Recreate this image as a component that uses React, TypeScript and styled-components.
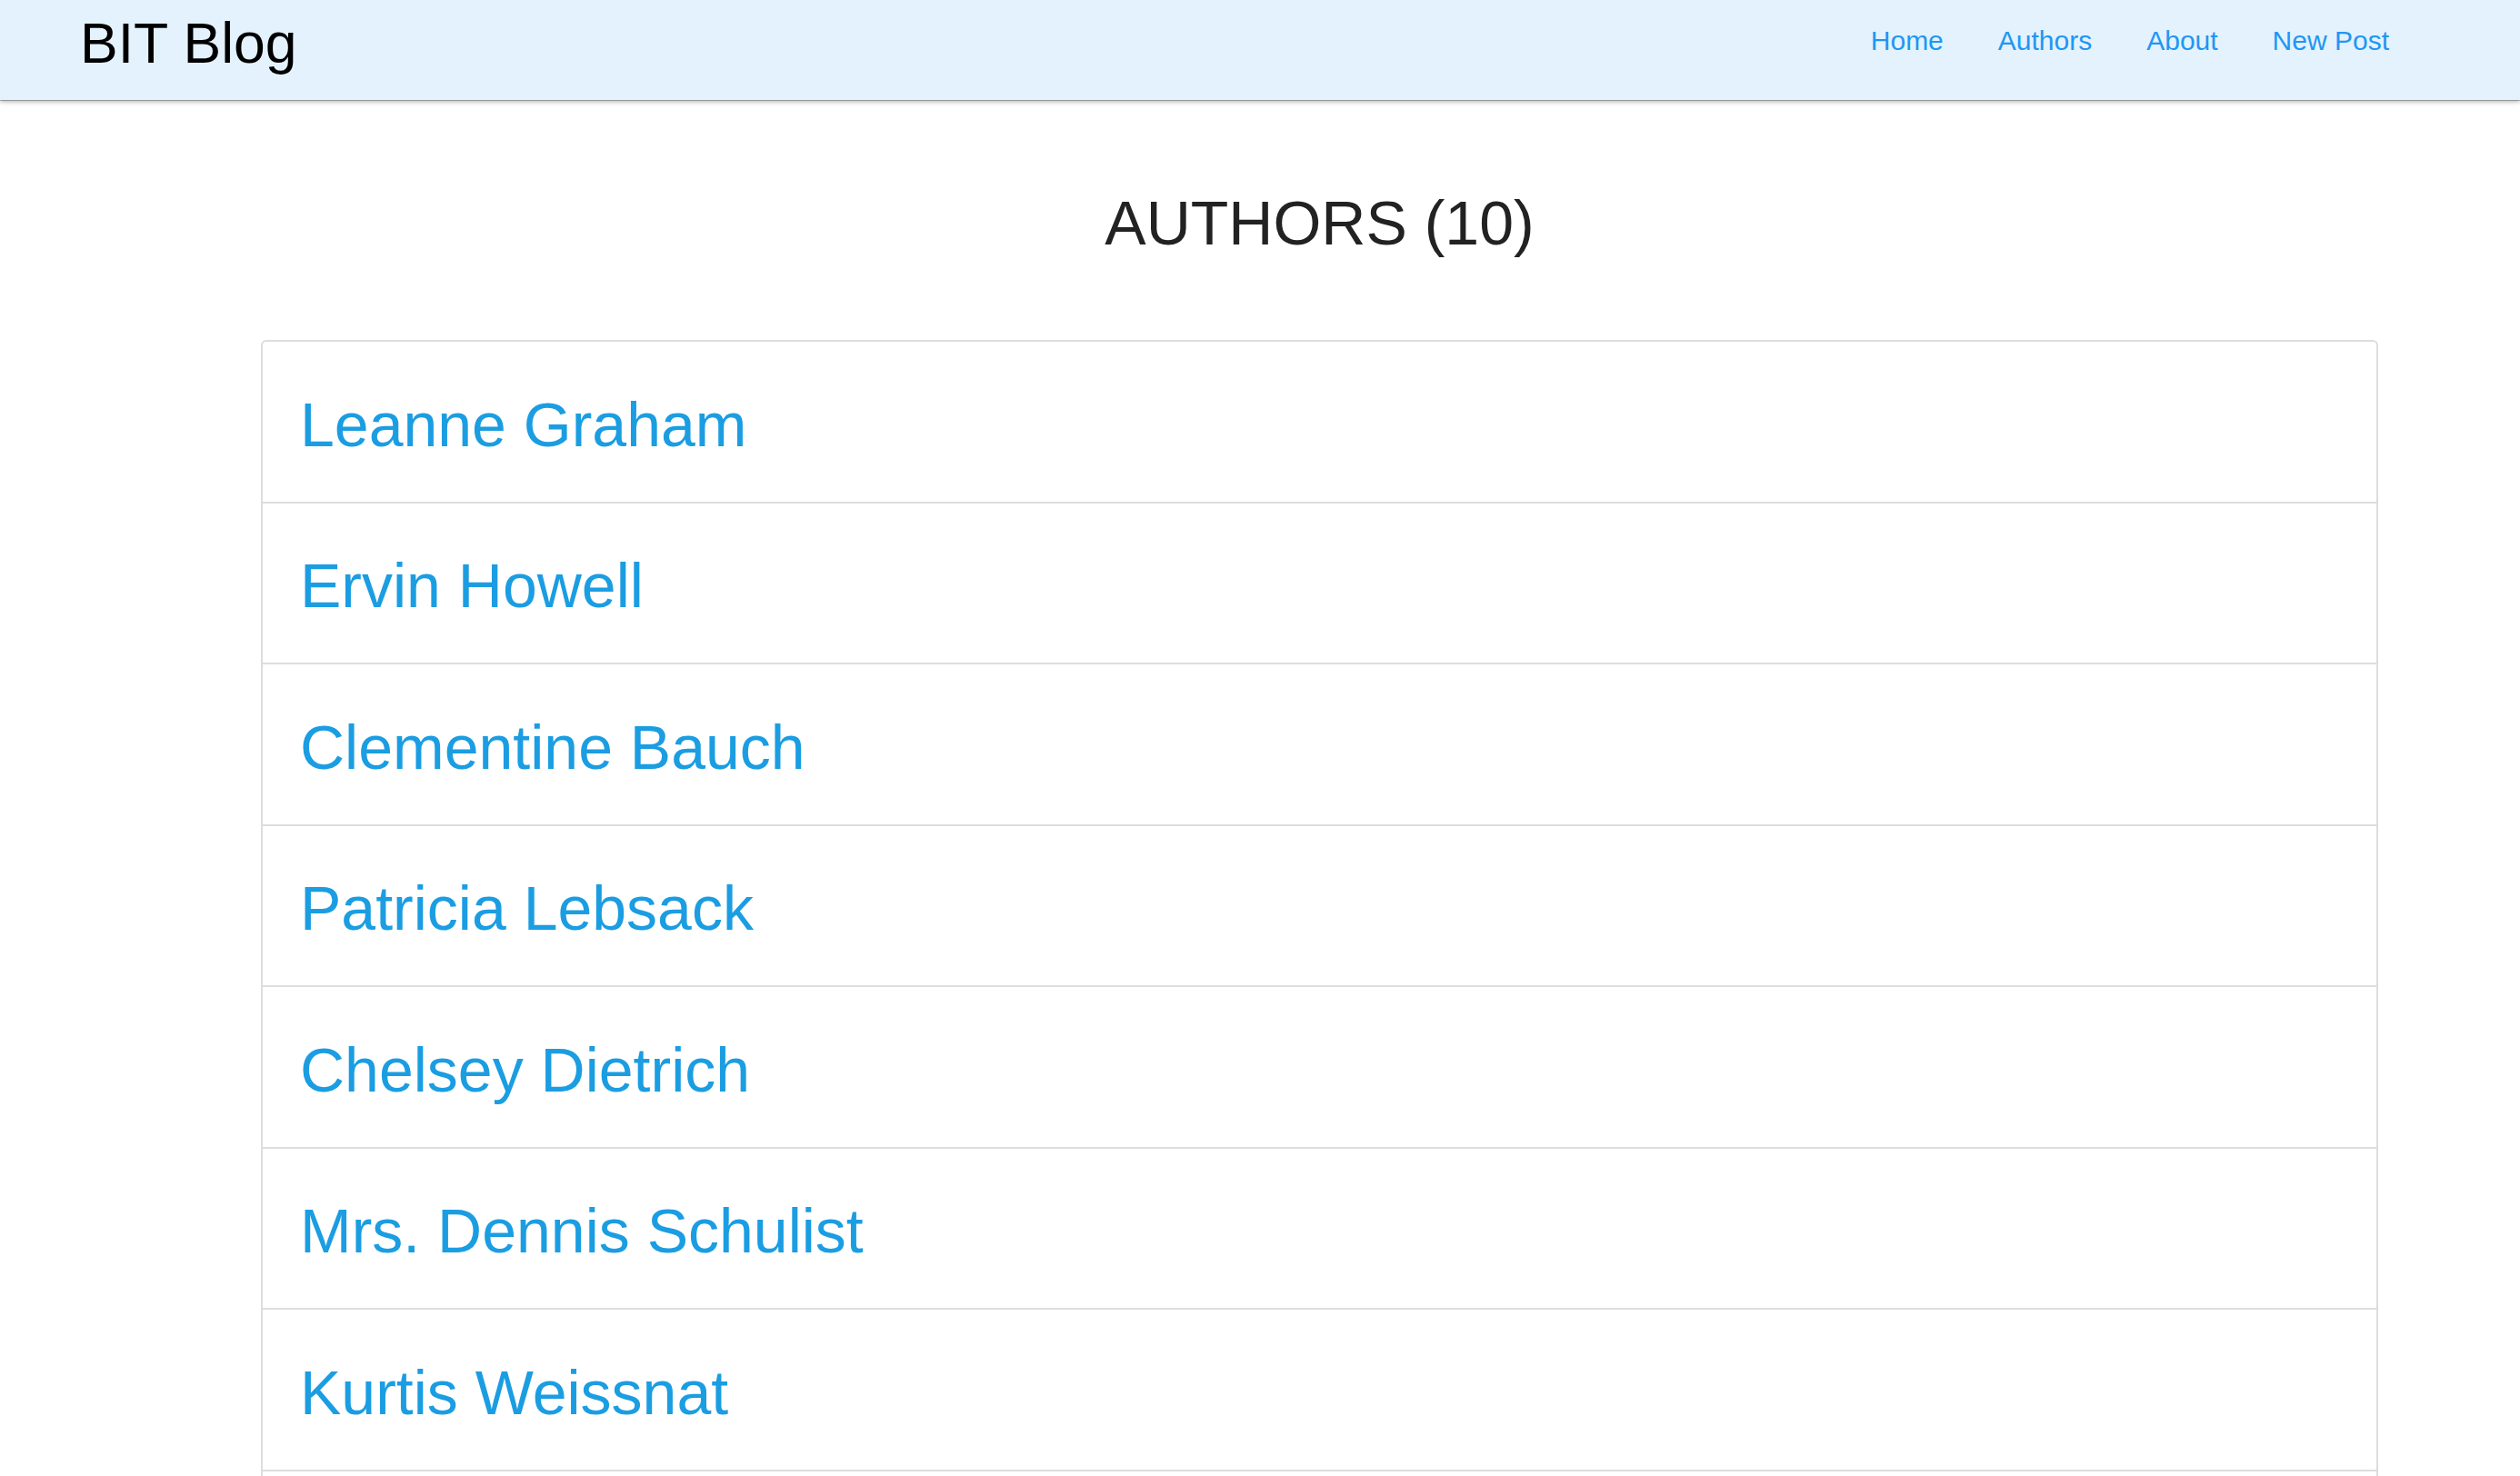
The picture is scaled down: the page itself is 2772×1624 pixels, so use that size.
import React from 'react'
import styled, { createGlobalStyle } from 'styled-components'

const AUTHORS = [
  'Leanne Graham',
  'Ervin Howell',
  'Clementine Bauch',
  'Patricia Lebsack',
  'Chelsey Dietrich',
  'Mrs. Dennis Schulist',
  'Kurtis Weissnat',
  'Nicholas Runolfsdottir V',
  'Glenna Reichert',
  'Clementina DuBuque',
]

const NAV_LINKS = ['Home', 'Authors', 'About', 'New Post']

const GlobalStyle = createGlobalStyle`
  html, body {
    margin: 0;
    padding: 0;
    background: #fff;
    font-family: "Liberation Sans", Arial, Helvetica, sans-serif;
  }
  * {
    box-sizing: border-box;
  }
`

const App: React.FC = () => {
  return (
    <>
      <GlobalStyle />
      <Navbar>
        <Brand href='#'>BIT Blog</Brand>
        <NavList>
          {NAV_LINKS.map((link) => (
            <NavItem key={link}>
              <NavLink href='#'>{link}</NavLink>
            </NavItem>
          ))}
        </NavList>
      </Navbar>
      <Main>
        <Title>AUTHORS ({AUTHORS.length})</Title>
        <AuthorList>
          {AUTHORS.map((name) => (
            <AuthorRow key={name}>
              <AuthorLink href='#'>{name}</AuthorLink>
            </AuthorRow>
          ))}
        </AuthorList>
      </Main>
    </>
  )
}

export default App

const Navbar = styled.nav`
  position: relative;
  z-index: 2;
  display: flex;
  justify-content: space-between;
  align-items: flex-start;
  height: 110px;
  padding: 0 114px 0 88px;
  background-color: #e3f2fd;
  box-shadow: 0 1px 0 rgba(0, 0, 0, 0.25), 0 2px 5px rgba(0, 0, 0, 0.3);
`

const Brand = styled.a`
  padding-top: 16px;
  font-size: 62.5px;
  line-height: 1;
  color: #000;
  text-decoration: none;
`

const NavList = styled.ul`
  display: flex;
  margin: 0;
  padding: 0;
  list-style: none;
`

const NavItem = styled.li`
  display: block;
`

const NavLink = styled.a`
  display: block;
  padding: 30px 30px 0;
  font-size: 30px;
  line-height: 30px;
  color: #2196f3;
  text-decoration: none;
`

const Main = styled.main`
  padding: 101px 156px 0 287px;
`

const Title = styled.h1`
  margin: 0 0 95px;
  font-size: 68px;
  font-weight: 400;
  line-height: 1;
  text-align: center;
  color: #222;
`

const AuthorList = styled.ul`
  margin: 0;
  padding: 0;
  list-style: none;
  border: 2px solid #dddddd;
  border-bottom: none;
  border-radius: 6px;
`

const AuthorRow = styled.li`
  display: flex;
  align-items: center;
  height: 177.5px;
  padding: 6px 41px 0;
  border-bottom: 2px solid #dddddd;
`

const AuthorLink = styled.a`
  font-size: 68px;
  line-height: 1;
  color: #1b9de2;
  text-decoration: none;
`
